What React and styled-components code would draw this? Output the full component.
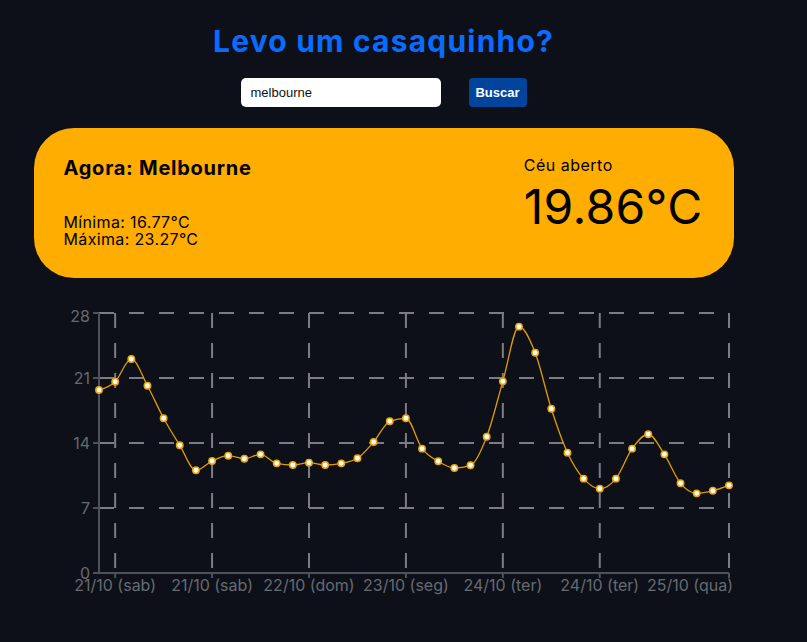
import React from "react";
import styled, { createGlobalStyle } from "styled-components";

const GlobalStyle = createGlobalStyle`
  html, body { margin: 0; padding: 0; background: #0d1018; }
  body { font-family: Inter, "Noto Sans", sans-serif; }
  * { box-sizing: border-box; }
`;

const Page = styled.div`
  min-height: 642px;
  background: #0d1018;
  display: flex;
  flex-direction: column;
  align-items: center;
  padding: 26px 40px 0 0;
`;

const Title = styled.h1`
  margin: 0;
  font-family: Inter, sans-serif;
  font-weight: 700;
  font-size: 30px;
  line-height: 30px;
  color: #0a6cff;
  letter-spacing: 1.2px;
`;

const SearchRow = styled.form`
  display: flex;
  gap: 28px;
  margin-top: 22px;
`;

const Input = styled.input`
  width: 200px;
  height: 29px;
  border: none;
  border-radius: 5px;
  background: #fff;
  padding: 0 10px;
  font-family: "Liberation Sans", Arial, sans-serif;
  font-size: 13px;
  color: #111;
  outline: none;
`;

const Button = styled.button`
  width: 58px;
  height: 29px;
  border: none;
  border-radius: 4px;
  background: #02449c;
  color: #fff;
  font-family: "Liberation Sans", Arial, sans-serif;
  font-weight: 700;
  font-size: 13px;
  padding: 0;
`;

const Card = styled.section`
  width: 700px;
  height: 150px;
  margin-top: 21px;
  border-radius: 40px;
  background: #ffad00;
  color: #000;
  display: flex;
  justify-content: space-between;
  padding: 27px 31px 0 30px;
`;

const Column = styled.div`
  display: flex;
  flex-direction: column;
  margin-top: ${(p) => p.$offset || 0}px;
`;

const Place = styled.h2`
  margin: 0;
  font-size: 20px;
  line-height: 24px;
  font-weight: 700;
  letter-spacing: 0.75px;
`;

const Range = styled.div`
  margin-top: 34px;
  font-size: 16px;
  line-height: 17px;
  font-weight: 400;
  letter-spacing: 0.35px;
`;

const Condition = styled.div`
  font-size: 16px;
  line-height: 20px;
  letter-spacing: 0.5px;
`;

const BigTemp = styled.div`
  margin-top: 4px;
  font-size: 48px;
  line-height: 56px;
  font-weight: 400;
  letter-spacing: 0.3px;
`;

const ChartWrap = styled.div`
  width: 700px;
  margin-top: 17px;
`;

const temps = [
  19.71, 20.6, 23.05, 20.17, 16.66, 13.75, 11.06, 12.06, 12.63, 12.31,
  12.78, 11.81, 11.63, 11.88, 11.63, 11.81, 12.35, 14.11, 16.34, 16.66,
  13.39, 12.03, 11.31, 11.6, 14.68, 20.64, 26.53, 23.72, 17.69, 12.96,
  10.16, 9.08, 10.16, 13.39, 14.94, 12.78, 9.66, 8.58, 8.86, 9.44,
];

const ticks = [
  { i: 1, label: "21/10 (sab)" },
  { i: 7, label: "21/10 (sab)" },
  { i: 13, label: "22/10 (dom)" },
  { i: 19, label: "23/10 (seg)" },
  { i: 25, label: "24/10 (ter)" },
  { i: 31, label: "24/10 (ter)" },
  { i: 39, label: "25/10 (qua)", end: true },
];

// local coords: absolute page minus (34, 295)
const X0 = 99 - 34;
const X1 = 729 - 34;
const YTOP = 313 - 295;
const YBOT = 573 - 295;
const xAt = (i) => X0 + (i * (X1 - X0)) / (temps.length - 1);
const yAt = (t) => YBOT - (t / 28) * (YBOT - YTOP);

function monotonePath(pts) {
  const n = pts.length;
  const sign = (v) => (v < 0 ? -1 : 1);
  const m = new Array(n).fill(0);
  const s = [];
  for (let i = 0; i < n - 1; i++) {
    s.push((pts[i + 1][1] - pts[i][1]) / (pts[i + 1][0] - pts[i][0]));
  }
  for (let i = 1; i < n - 1; i++) {
    const h0 = pts[i][0] - pts[i - 1][0];
    const h1 = pts[i + 1][0] - pts[i][0];
    const s0 = s[i - 1];
    const s1 = s[i];
    const p = (s0 * h1 + s1 * h0) / (h0 + h1);
    m[i] = (sign(s0) + sign(s1)) * Math.min(Math.abs(s0), Math.abs(s1), 0.5 * Math.abs(p)) || 0;
  }
  m[0] = (3 * s[0] - m[1]) / 2;
  m[n - 1] = (3 * s[n - 2] - m[n - 2]) / 2;
  let d = `M${pts[0][0]},${pts[0][1]}`;
  for (let i = 0; i < n - 1; i++) {
    const [x0, y0] = pts[i];
    const [x1, y1] = pts[i + 1];
    const dx = (x1 - x0) / 3;
    d += `C${x0 + dx},${y0 + dx * m[i]},${x1 - dx},${y1 - dx * m[i + 1]},${x1},${y1}`;
  }
  return d;
}

const AxisText = styled.text`
  font-family: Inter, sans-serif;
  font-size: 16px;
  fill: #666b72;
`;

function Chart() {
  const pts = temps.map((t, i) => [xAt(i), yAt(t)]);
  const yTicks = [0, 7, 14, 21, 28];
  return (
    <svg width="700" height="310" viewBox="0 0 700 310">
      {yTicks.slice(1).map((v) => (
        <line key={"h" + v} x1={X0} x2={X1} y1={yAt(v)} y2={yAt(v)} stroke="#7b7d82" strokeWidth="2" strokeDasharray="15 15" />
      ))}
      {ticks.map((t) => (
        <line key={"v" + t.i} x1={xAt(t.i)} x2={xAt(t.i)} y1={YTOP} y2={YBOT} stroke="#7b7d82" strokeWidth="2" strokeDasharray="15 15" />
      ))}
      <line x1={X0} x2={X0} y1={YTOP} y2={YBOT} stroke="#4e5157" strokeWidth="2" />
      <line x1={X0} x2={X1} y1={YBOT} y2={YBOT} stroke="#4e5157" strokeWidth="2" />
      {yTicks.map((v) => (
        <g key={"yt" + v}>
          <line x1={X0 - 6} x2={X0} y1={yAt(v)} y2={yAt(v)} stroke="#4e5157" strokeWidth="2" />
          <AxisText x={X0 - 9} y={v === 28 ? yAt(v) + 9 : yAt(v) + 6} textAnchor="end">
            {v}
          </AxisText>
        </g>
      ))}
      {ticks.map((t) => (
        <g key={"xt" + t.i}>
          <line x1={xAt(t.i)} x2={xAt(t.i)} y1={YBOT} y2={YBOT + 5} stroke="#4e5157" strokeWidth="2" />
          <AxisText x={t.end ? xAt(t.i) + 4 : xAt(t.i)} y={YBOT + 18} textAnchor={t.end ? "end" : "middle"}>
            {t.label}
          </AxisText>
        </g>
      ))}
      <path d={monotonePath(pts)} fill="none" stroke="#e09c00" strokeWidth="1.3" />
      {pts.map(([x, y], i) => (
        <circle key={i} cx={x} cy={y} r="3.2" fill="#fff" stroke="#eda500" strokeWidth="1.5" />
      ))}
    </svg>
  );
}

export default function App() {
  return (
    <>
      <GlobalStyle />
      <Page>
        <Title>Levo um casaquinho?</Title>
        <SearchRow onSubmit={(e) => e.preventDefault()}>
          <Input defaultValue="melbourne" />
          <Button type="submit">Buscar</Button>
        </SearchRow>
        <Card>
          <Column $offset={1}>
            <Place>Agora: Melbourne</Place>
            <Range>
              Mínima: 16.77°C
              <br />
              Máxima: 23.27°C
            </Range>
          </Column>
          <Column>
            <Condition>Céu aberto</Condition>
            <BigTemp>19.86°C</BigTemp>
          </Column>
        </Card>
        <ChartWrap>
          <Chart />
        </ChartWrap>
      </Page>
    </>
  );
}
